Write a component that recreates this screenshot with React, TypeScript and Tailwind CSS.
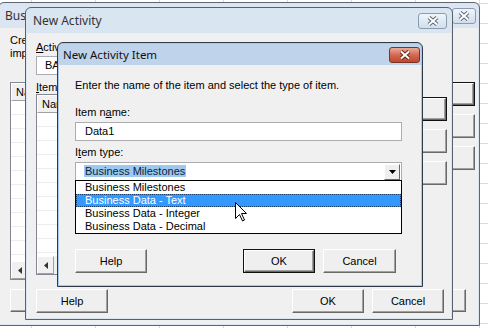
import React from "react";

const sans = "font-['Liberation_Sans',Arial,sans-serif]";
const cap = "font-['Noto_Sans','Open_Sans',sans-serif]";

function CloseBtn({ active, className = "" }: { active?: boolean; className?: string }) {
  return (
    <div
      className={`flex h-[16px] items-center justify-center rounded-[3px] border ${
        active
          ? "border-[#7a3327] bg-gradient-to-b from-[#e9aa99] via-[#d36a52] to-[#c2462f]"
          : "border-[#8a9bb0] bg-gradient-to-b from-[#f0f5fa] to-[#d2deec]"
      } ${className}`}
    >
      <svg width="12" height="10" viewBox="0 0 12 10">
        <path d="M2 1.5L10 8.5M10 1.5L2 8.5" stroke={active ? "#6b2217" : "#5b6878"} strokeWidth="4" />
        <path d="M2 1.5L10 8.5M10 1.5L2 8.5" stroke="#fff" strokeWidth="2" />
      </svg>
    </div>
  );
}

function Btn({ children, def, className = "" }: { children?: React.ReactNode; def?: boolean; className?: string }) {
  return (
    <div className={`${def ? "border border-[#111]" : ""} ${className}`}>
      <div className="flex h-full items-center justify-center border border-t-white border-l-white border-b-[#696969] border-r-[#696969] bg-[#efefef] shadow-[inset_-1px_-1px_0_#a0a0a0]">
        {children}
      </div>
    </div>
  );
}

function ListView({ header, className = "" }: { header: string; className?: string }) {
  return (
    <div className={`flex flex-col border border-[#828790] bg-white ${className}`}>
      <div className="flex h-[18px] shrink-0">
        <div className="flex w-[120px] items-center border border-t-white border-l-white border-b-[#a0a0a0] border-r-[#a0a0a0] bg-[#f0f0f0] pl-[4px]">
          {header}
        </div>
      </div>
      <div className="flex-1 [background-image:linear-gradient(to_bottom,transparent_13px,#ececec_13px)] [background-size:100%_14px]" />
      <div className="flex h-[18px] shrink-0 bg-[#f0f0f0]">
        <div className="flex w-[17px] items-center justify-center border border-t-white border-l-white border-b-[#a0a0a0] border-r-[#a0a0a0]">
          <svg width="4" height="7" viewBox="0 0 4 7">
            <path d="M4 0L0 3.5L4 7Z" fill="#333" />
          </svg>
        </div>
      </div>
    </div>
  );
}

export default function App() {
  return (
    <div
      className={`relative h-[328px] w-[488px] overflow-hidden bg-white [background-image:linear-gradient(to_right,#d4dbe6_1px,transparent_1px),linear-gradient(to_bottom,#d4dbe6_1px,transparent_1px)] [background-size:64px_20px] [background-position:31px_3px] ${sans} text-[11px] leading-[13px] text-black`}
    >
      {/* back window */}
      <div className="absolute left-[-2px] top-[2px] flex h-[324px] w-[482px] flex-col rounded-t-[6px] border border-[#5d6773] bg-[#dce6f2]">
        <div className="flex h-[25px] shrink-0 items-center justify-between pl-[6px] pr-[3px]">
          <span className={`${cap} text-[12px] text-[#333]`}>Business Activities</span>
          <CloseBtn className="w-[24px]" />
        </div>
        <div className="mx-px mb-px flex flex-1 flex-col bg-[#f0f0f0] pl-[10px] pr-[3px] pt-[6px]">
          <p>Create the activities that are part of this business scenario.</p>
          <p>important: activity names must be unique.</p>
          <div className="mt-[22px] flex h-[198px]">
            <ListView header="Name" className="flex-1" />
            <div className="ml-[10px] flex w-[72px] flex-col gap-[8px]">
              <Btn def className="h-[24px]">Add</Btn>
              <Btn className="h-[24px]">Edit</Btn>
              <Btn className="h-[24px]">Del</Btn>
            </div>
          </div>
          <div className="mt-[9px] flex h-[23px] justify-between pr-[9px]">
            <Btn className="w-[72px]">Help</Btn>
            <div className="flex gap-[8px]">
              <Btn className="w-[72px]">OK</Btn>
              <Btn className="w-[72px]">Cancel</Btn>
            </div>
          </div>
        </div>
      </div>

      {/* middle window */}
      <div className="absolute left-[25px] top-[7px] flex h-[313px] w-[428px] flex-col rounded-t-[6px] border border-[#58626e] bg-[#dae5f2]">
        <div className="flex h-[25px] shrink-0 items-center justify-between pl-[7px] pr-[5px]">
          <span className={`${cap} text-[12px] text-[#333]`}>New Activity</span>
          <CloseBtn className="w-[29px]" />
        </div>
        <div className="mx-px mb-px flex flex-1 flex-col bg-[#f0f0f0] pl-[9px] pr-[4px] pt-[8px]">
          <p>
            <span className="underline">A</span>ctivity name:
          </p>
          <div className="mt-[2px] flex h-[19px] w-[340px] items-center border border-[#abadb3] bg-white pl-[8px]">
            BA_Activity1
          </div>
          <p className="mt-[6px]">
            <span className="underline">I</span>tems:
          </p>
          <div className="flex h-[181px]">
            <ListView header="Name" className="flex-1" />
            <div className="ml-[10px] flex w-[69px] flex-col gap-[8px] pt-[3px]">
              <Btn def className="h-[24px]">Add</Btn>
              <Btn className="h-[24px]">Edit</Btn>
              <Btn className="h-[24px]">Del</Btn>
            </div>
          </div>
          <div className="mt-[14px] flex h-[24px] justify-between pr-[3px]">
            <Btn className="w-[72px]">Help</Btn>
            <div className="flex gap-[8px]">
              <Btn className="w-[72px]">OK</Btn>
              <Btn className="w-[72px]">Cancel</Btn>
            </div>
          </div>
        </div>
      </div>

      {/* active window */}
      <div className="absolute left-[57px] top-[42px] flex h-[245px] w-[366px] flex-col rounded-t-[6px] border border-[#2e3b4a] bg-[#bfd3eb] shadow-[inset_0_0_0_1px_#a9c8ea]">
        <div className="flex h-[22px] shrink-0 items-center justify-between pl-[5px] pr-[2px] pt-px">
          <span className={`${cap} text-[11.5px] text-[#111]`}>New Activity Item</span>
          <CloseBtn active className="w-[31px]" />
        </div>
        <div className="mx-px mb-px flex flex-1 flex-col bg-[#f0f0f0] pl-[16px] pr-[19px] pt-[14px]">
          <p>Enter the name of the item and select the type of item.</p>
          <p className="mt-[14px]">
            Item n<span className="underline">a</span>me:
          </p>
          <div className="mt-[3px] flex h-[19px] items-center border border-[#abadb3] bg-white pl-[9px]">Data1</div>
          <p className="mt-[5px]">
            I<span className="underline">t</span>em type:
          </p>
          <div className="relative mt-[3px] flex h-[19px] items-center border border-[#abadb3] bg-white pl-[8px]">
            <span className="flex-1">
              <span className="bg-[#9dc9f0] px-px text-[#0b1f3c]">Business Milestones</span>
            </span>
            <div className="mr-px flex h-[16px] w-[16px] items-center justify-center border border-t-white border-l-white border-b-[#696969] border-r-[#696969] bg-[#efefef]">
              <svg width="7" height="4" viewBox="0 0 7 4">
                <path d="M0 0H7L3.5 4Z" fill="#000" />
              </svg>
            </div>
            <div className="absolute left-[-1px] right-[-1px] top-full z-10 flex flex-col border border-black bg-white">
              <div className="flex h-[13px] items-center pl-[9px]">Business Milestones</div>
              <div className="flex h-[13px] items-center border border-dotted border-[#123a6b] bg-[#3399ff] pl-[8px] text-white">
                Business Data - Text
              </div>
              <div className="flex h-[13px] items-center pl-[9px]">Business Data - Integer</div>
              <div className="flex h-[13px] items-center pl-[9px]">Business Data - Decimal</div>
            </div>
          </div>
          <div className="mt-[68px] flex h-[24px] justify-between pr-[6px]">
            <Btn className="w-[72px]">Help</Btn>
            <div className="flex gap-[8px]">
              <Btn def className="w-[72px]">OK</Btn>
              <Btn className="w-[73px]">Cancel</Btn>
            </div>
          </div>
        </div>
      </div>

      {/* mouse pointer */}
      <svg className="absolute left-[235px] top-[202px] z-20" width="13" height="20" viewBox="0 0 13 20">
        <path d="M0.5 0.5V16.5L4.5 12.5L7.5 19L9.5 18L6.5 11.5H11.5Z" fill="#fff" stroke="#000" strokeWidth="1" />
      </svg>
    </div>
  );
}
